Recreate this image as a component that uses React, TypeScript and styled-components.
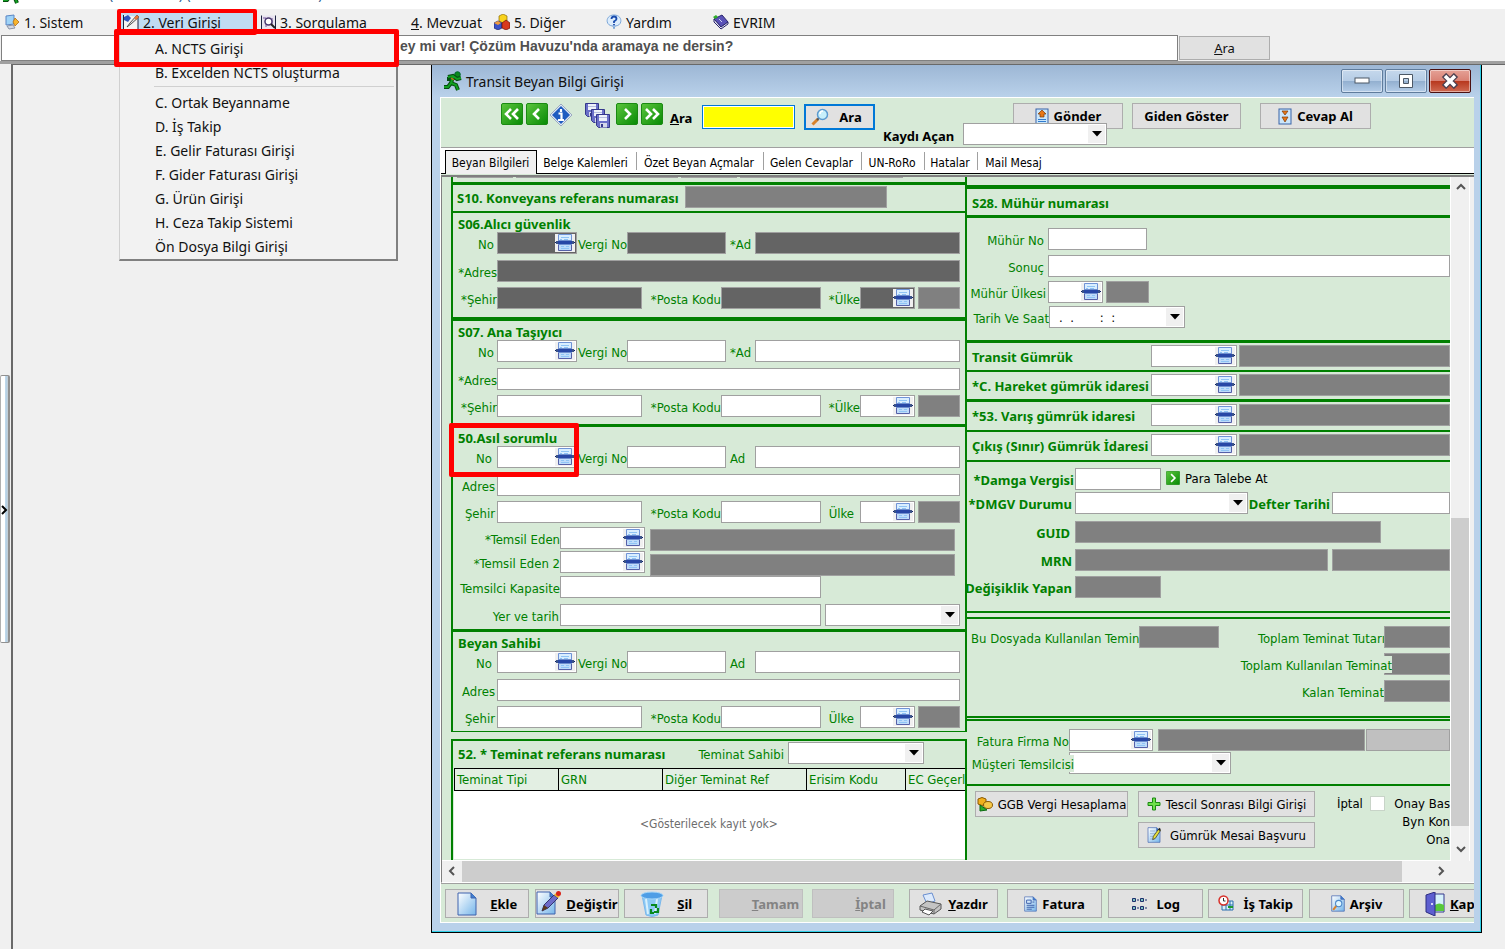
import React from "react";
import styled, { createGlobalStyle, css } from "styled-components";

const ui = '"Noto Sans", "Open Sans", sans-serif';
const form = '"DejaVu Sans Condensed", "DejaVu Sans", sans-serif';
const green = "#008000";
const mint = "#d7ead7";
const dark = "#808080";
const darker = "#646464";
const line = "#a0a0a0";

const Global = createGlobalStyle`
  * { box-sizing: border-box; }
  body { margin: 0; background: #f0f0f0; font-family: ${ui}; font-size: 14px; color: #111; overflow: hidden; }
  button, input, select { font: inherit; color: inherit; margin: 0; border-radius: 0; }
  button { padding: 0; }
  h1, h2, p, ul { margin: 0; padding: 0; font-weight: normal; }
`;

/* ---------- application frame ---------- */
const Page = styled.div`
  display: flex;
  flex-direction: column;
  min-height: 100vh;
  overflow: hidden;
`;
const AppTitle = styled.header`
  display: flex;
  align-items: flex-end;
  gap: 87px;
  height: 9px;
  padding: 0 0 5px 2px;
  background: #fff;
  overflow: hidden;
  color: #2a5a8c;
  line-height: 20px;
  white-space: pre;
`;
const MenuBar = styled.nav`
  position: relative;
  z-index: 5;
  display: flex;
  align-items: center;
  height: 26px;
  padding-left: 4px;
`;
const MenuItem = styled.button<{ $w: number; $active?: boolean }>`
  display: flex;
  align-items: center;
  gap: 4px;
  width: ${(p) => p.$w}px;
  height: 22px;
  border: 0;
  padding: 0 0 0 1px;
  background: ${(p) => (p.$active ? "#c0dcf3" : "transparent")};
  white-space: nowrap;
  text-align: left;
  svg { flex: none; }
`;
const MenuHolder = styled.div`
  position: relative;
  width: 137px;
  margin-right: 4px;
`;
const Dropdown = styled.ul`
  position: absolute;
  top: 23px;
  left: 0;
  width: 279px;
  padding: 3px 2px 0 0;
  background: #f2f2f2;
  border-right: 2px solid #808080;
  border-bottom: 2px solid #808080;
  border-left: 1px solid #d0d0d0;
  list-style: none;
`;
const DropItem = styled.li<{ $rule?: boolean }>`
  height: ${(p) => (p.$rule ? 30 : 24)}px;
  button {
    width: 100%;
    height: 24px;
    border: 0;
    padding: 0 0 0 35px;
    background: none;
    text-align: left;
    line-height: 24px;
  }
  &::after {
    content: "";
    display: ${(p) => (p.$rule ? "block" : "none")};
    margin: 1px 0 0 34px;
    border-top: 1px solid #d0d0d0;
  }
`;
const RedBox = styled.div<{ $x: number; $y: number; $w: number; $h: number; $b?: number }>`
  position: absolute;
  left: ${(p) => p.$x}px;
  top: ${(p) => p.$y}px;
  width: ${(p) => p.$w}px;
  height: ${(p) => p.$h}px;
  border: ${(p) => p.$b || 5}px solid #f00;
  border-radius: 2px;
  pointer-events: none;
  z-index: 6;
`;
const SearchRow = styled.form`
  display: flex;
  align-items: center;
  gap: 1px;
  height: 26px;
  padding-right: 235px;
  padding-left: 1px;
`;
const SearchBox = styled.input`
  flex: 1;
  min-width: 0;
  height: 26px;
  border: 1px solid #808080;
  padding: 0 0 4px 398px;
  background: #fff;
  color: #505050;
  font: bold 14px "Liberation Sans", Arial, sans-serif;
`;
const SearchButton = styled.button`
  width: 91px;
  height: 24px;
  border: 1px solid #adadad;
  background: #e1e1e1;
  font-size: 13px;
`;
const Body = styled.main`
  display: flex;
  align-items: stretch;
  flex: 1;
  border-top: 3px solid #a0a0a0;
`;
const Splitter = styled.div`
  display: flex;
  align-items: flex-start;
  width: 11px;
  padding-top: 311px;
`;
const SplitHandle = styled.button`
  width: 10px;
  height: 268px;
  border: 1px solid #909090;
  border-left-color: #b0b0b0;
  border-radius: 2px;
  background: linear-gradient(90deg, #fff 45%, #a9cbe4 60%, #c8d8e4 80%, #909090 90%);
`;
const Desktop = styled.div`
  flex: 1;
  min-width: 0;
  border-left: 2px solid #696969;
  border-top: 1px solid #696969;
  padding: 0 23px 17px 418px;
`;

/* ---------- child window ---------- */
const Win = styled.section`
  border: 1px solid #000;
  border-top: 0;
  background: #b9d1ea;
  box-shadow: inset -1px -1px 0 #2fd0e8;
  padding: 0 7px 9px 8px;
`;
const WinTitle = styled.header`
  display: flex;
  align-items: center;
  height: 32px;
  margin: 0 -6px 0 -8px;
  padding: 0 9px 0 11px;
  background: linear-gradient(#9db7d5, #b9d1ea);
  h1 { flex: 1; padding-left: 3px; font-size: 14px; }
`;
const WinButton = styled.button<{ $close?: boolean }>`
  display: flex;
  align-items: center;
  justify-content: center;
  width: 42px;
  height: 24px;
  margin-left: 2px;
  border: 1px solid ${(p) => (p.$close ? "#4a1010" : "#5f7c9c")};
  border-radius: 2px;
  background: ${(p) =>
    p.$close
      ? "linear-gradient(#e5a196 0, #d98275 48%, #b8391f 52%, #cf6a52 100%)"
      : "linear-gradient(#c5d8ec 0, #b5cce5 48%, #93b0d0 52%, #b4cde8 100%)"};
  box-shadow: inset 0 0 0 1px rgba(255, 255, 255, 0.45);
`;
const WinBody = styled.div`
  border-left: 1px solid #fff;
  border-top: 1px solid #fff;
  background: ${mint};
  overflow: hidden;
`;
const Toolbar = styled.div`
  position: relative;
  display: flex;
  align-items: flex-start;
  height: 49px;
  padding: 5px 0 0 59px;
  font: bold 13px ${ui};
  color: #000;
`;
const IconButton = styled.button<{ $w: number }>`
  flex: none;
  display: flex;
  justify-content: center;
  width: ${(p) => p.$w}px;
  height: 25px;
  border: 0;
  background: none;
`;
const SearchLabel = styled.label`
  width: 38px;
  padding: 6px 0 0 6px;
`;
const YellowInput = styled.input`
  width: 93px;
  height: 24px;
  margin: 2px 9px 0 0;
  border: 1px solid #0078d7;
  padding: 0 2px;
  background: #ff0;
  box-shadow: inset 0 0 0 1px #fff;
  outline: 0;
`;
const Push = styled.button<{ $w: number; $ml?: number; $h?: number; $focus?: boolean }>`
  flex: none;
  display: flex;
  align-items: center;
  justify-content: center;
  gap: 5px;
  width: ${(p) => p.$w}px;
  height: ${(p) => p.$h || 26}px;
  margin-left: ${(p) => p.$ml || 0}px;
  border: ${(p) => (p.$focus ? "2px solid #0078d7" : "1px solid #adadad")};
  background: #e1e1e1;
  white-space: nowrap;
  color: #000;
  &:disabled { background: #cccccc; border-color: #bfbfbf; color: #838383; }
`;
const FindSlot = styled.div`
  padding-top: 1px;
  button { gap: 10px; padding-right: 6px; }
`;
const SendGroup = styled.div`
  display: flex;
  margin-left: 138px;
`;
const OpenerGroup = styled.div`
  position: absolute;
  left: 442px;
  top: 25px;
  display: flex;
  align-items: center;
  label { width: 80px; padding-top: 4px; }
`;
const TabStrip = styled.div`
  display: flex;
  align-items: flex-end;
  height: 27px;
  padding-left: 4px;
  border-top: 1px solid ${line};
  border-bottom: 1px solid #000;
  background: #fff;
  font: 12px ${form};
  color: #000;
`;
const Tab = styled.button<{ $w: number; $active?: boolean }>`
  flex: none;
  width: ${(p) => p.$w}px;
  height: 18px;
  margin-bottom: 3px;
  padding: 3px 2px 0 0;
  border: 0;
  border-right: 1px solid ${line};
  background: none;
  white-space: nowrap;
  ${(p) =>
    p.$active &&
    css`
      height: 24px;
      margin-bottom: -1px;
      padding: 0 1px 0 0;
      border: 1px solid #000;
      border-bottom: 0;
      background: #f0f0f0;
    `}
  &:last-child { border-right: 0; }
`;
const Pane = styled.div`
  display: grid;
  grid-template-columns: minmax(0, 1fr) 23px;
  grid-template-rows: auto 21px;
  margin-top: 1px;
  border-top: 2px solid ${dark};
  border-left: 1px solid ${dark};
  border-bottom: 1px solid #fff;
  background: #f0f0f0;
`;
const FormArea = styled.div`
  display: flex;
  height: 684px;
  padding-left: 9px;
  border-right: 1px solid #fff;
  border-bottom: 1px solid #fff;
  background: ${mint};
  overflow: hidden;
  font: 13px ${form};
  color: ${green};
`;
const VScroll = styled.div`
  display: flex;
  flex-direction: column;
  width: 19px;
  padding-bottom: 2px;
  border-right: 1px solid #fff;
`;
const HScroll = styled.div`
  display: flex;
`;
const Arrow = styled.button`
  flex: none;
  display: flex;
  align-items: center;
  justify-content: center;
  width: 20px;
  height: 20px;
  border: 0;
  background: none;
`;
const Track = styled.div<{ $grow: number; $thumb?: boolean }>`
  flex: ${(p) => p.$grow} 1 0;
  background: ${(p) => (p.$thumb ? "#cdcdcd" : "#f0f0f0")};
`;

/* ---------- form parts ---------- */
const LeftCol = styled.div`
  flex: none;
  display: flex;
  flex-direction: column;
  width: 516px;
`;
const LeftBox = styled.div<{ $grow?: boolean }>`
  flex: ${(p) => (p.$grow ? 1 : "none")};
  border: 0 solid ${green};
  border-left-width: 2px;
  border-right-width: 2px;
  ${(p) => (p.$grow ? "border-top-width: 2px; margin-top: 7px; overflow: hidden;" : "border-bottom-width: 1px;")}
`;
const RightCol = styled.div`
  flex: 1;
  min-width: 0;
  overflow: hidden;
`;
const Rule = styled.div<{ $h: number }>`
  height: ${(p) => p.$h}px;
  background: ${green};
`;
const Tail = styled.div`
  display: flex;
  gap: 3px;
  height: 5px;
  padding-left: 4px;
  i { height: 1px; background: ${line}; }
`;
const Title = styled.h2`
  height: 19px;
  padding: 2px 0 0 5px;
  font: bold 13px/18px ${ui};
  white-space: nowrap;
`;
const TitleHolder = styled.div`
  position: relative;
`;
const Rows = styled.div<{ $b?: number; $t?: number; $gap?: number }>`
  display: flex;
  flex-direction: column;
  gap: ${(p) => p.$gap ?? 6}px;
  padding: ${(p) => p.$t || 0}px 0 ${(p) => p.$b || 0}px;
`;
const Row = styled.div<{ $t?: number }>`
  display: flex;
  height: 22px;
  margin-top: ${(p) => p.$t || 0}px;
`;
const Label = styled.label<{ $w: number; $left?: boolean; $end?: number; $bold?: boolean }>`
  flex: none;
  display: flex;
  align-items: center;
  justify-content: ${(p) => (p.$left ? "flex-start" : "flex-end")};
  width: ${(p) => p.$w}px;
  padding: 2px ${(p) => (p.$left ? 0 : p.$end ?? 2)}px 0 ${(p) => (p.$left ? p.$end ?? 2 : 0)}px;
  overflow: hidden;
  white-space: nowrap;
  ${(p) => p.$bold && `font: bold 13px ${ui};`}
`;
const OverLabel = styled(Label)<{ $over: number }>`
  position: relative;
  z-index: 1;
  height: 17px;
  margin: 3px ${(p) => -p.$over}px 0 0;
  background: ${mint};
`;
const fieldFace = css<{ $w?: number; $bg?: string }>`
  ${(p) => (p.$w ? `flex: none; width: ${p.$w}px;` : "flex: 1; min-width: 0;")}
  height: 22px;
  border: 1px solid ${line};
  background: ${(p) => p.$bg || "#fff"};
`;
const Input = styled.input<{ $w?: number; $bg?: string }>`
  ${fieldFace}
  padding: 0 4px;
  color: #000;
`;
const FieldShell = styled.div<{ $w?: number; $bg?: string }>`
  ${fieldFace}
  display: flex;
  padding: 1px;
  color: #000;
  input, select {
    flex: 1;
    min-width: 0;
    border: 0;
    padding: 0 8px;
    background: transparent;
    appearance: none;
    white-space: pre;
  }
  > button, > span {
    flex: none;
    display: flex;
    align-items: center;
    justify-content: center;
    width: 20px;
    border: 0;
    background: #f0f0f0;
  }
  > span { width: 17px; pointer-events: none; }
`;
const Space = styled.span<{ $w: number }>`
  flex: none;
  width: ${(p) => p.$w}px;
`;
const Stack = styled.div<{ $gap: number; $t?: number }>`
  display: flex;
  flex-direction: column;
  gap: ${(p) => p.$gap}px;
  padding-top: ${(p) => p.$t || 0}px;
`;
const Pair = styled.div`
  display: flex;
  height: 49px;
  margin-top: -2px;
`;
const Grid = styled.table`
  width: 540px;
  height: 91px;
  margin: 4px 0 0 1px;
  border-collapse: collapse;
  table-layout: fixed;
  background: #fff;
  th {
    height: 22px;
    border: 1px solid #000;
    padding: 0 2px;
    background: #e3efe3;
    text-align: left;
    font-weight: normal;
    white-space: nowrap;
  }
  td { padding: 0 30px 2px 0; text-align: center; color: #6d6d6d; font-size: 12px; }
`;
const Column = styled.th<{ $w?: number }>`
  width: ${(p) => (p.$w ? p.$w + "px" : "auto")};
`;
const ParaLink = styled.button`
  display: flex;
  align-items: center;
  gap: 5px;
  height: 20px;
  border: 0;
  padding: 0;
  margin-left: 5px;
  background: none;
  color: #000;
  white-space: nowrap;
`;
const Actions = styled.div`
  display: grid;
  grid-template-columns: 153px 177px auto minmax(0, 1fr);
  column-gap: 10px;
  row-gap: 5px;
  padding: 5px 0 0 8px;
  color: #000;
  > :nth-child(5) { grid-column: 2; }
`;
const CheckLabel = styled.label`
  display: flex;
  align-items: center;
  gap: 7px;
  padding-left: 12px;
  height: 24px;
  white-space: nowrap;
`;
const Check = styled.input`
  appearance: none;
  width: 15px;
  height: 15px;
  border: 1px solid #c8d4c8;
  background: #fff;
`;
const Notes = styled.div`
  display: flex;
  flex-direction: column;
  align-items: flex-end;
  height: 57px;
  padding-top: 4px;
  line-height: 18px;
  white-space: nowrap;
  grid-row: span 2;
`;
const Footer = styled.footer`
  display: flex;
  height: 40px;
  padding: 5px 0 0 4px;
  border-top: 1px solid ${line};
  border-bottom: 1px solid #fff;
  font: bold 13px ${ui};
  overflow: hidden;
`;

/* ---------- icons ---------- */
const Runner = ({ s = 20 }: { s?: number }) => (
  <svg width={s} height={s} viewBox="0 0 20 20">
    <circle cx="14.5" cy="3.5" r="2.8" fill="#0b8a1c" stroke="#063" />
    <path d="M5 6l5-1 4 3 4-1M10 6l-2 6 5 2 2 5M8 12l-3 4H1M4 8l3 0" fill="none" stroke="#064d10" strokeWidth="4" />
    <path d="M5 6l5-1 4 3 4-1M10 6l-2 6 5 2 2 5M8 12l-3 4H1" fill="none" stroke="#12a022" strokeWidth="2" />
    <path d="M8 7l3 2" stroke="#c66a1a" strokeWidth="1.5" />
  </svg>
);
const Lookup = () => (
  <svg width="20" height="18" viewBox="0 0 20 18">
    <path d="M3.5.5h13v8h-13z" fill="#d9eeff" stroke="#6f93d6" />
    <path d="M3.500 8.500h13v8h-13z" fill="#bfdcfa" stroke="#5560a8" />
    <path d="M6 3.500h8M5 5.500h2m2 0h4M6 12.500h3m2 0h3M6 14.500h8" stroke="#8fc4f5" />
    <path d="M3 6h14v5H3z" fill="#6f8fce" />
    <path d="M1 8.500h18" stroke="#2747a6" strokeWidth="3" />
    <path d="M1 8.500h2m14 0h2" stroke="#3c5488" strokeWidth="3" />
    <path d="M0 8.500h1m18 0h1" stroke="#0c1f66" strokeWidth="1" />
  </svg>
);
const Down = () => (
  <svg width="10" height="6" viewBox="0 0 10 6"><path d="M0 0h10L5 5.500z" fill="#000" /></svg>
);
const Chevron = ({ d }: { d: string }) => (
  <svg width="10" height="10" viewBox="0 0 10 10"><path d={d} fill="none" stroke="#555" strokeWidth="2" /></svg>
);
const GreenNav = ({ d, s = 22 }: { d: string; s?: number }) => (
  <svg width={s} height={s} viewBox="0 0 22 22">
    <defs>
      <linearGradient id="navg" x2="1" y2="1"><stop stopColor="#5cc63d" /><stop offset="1" stopColor="#078a05" /></linearGradient>
    </defs>
    <rect x=".5" y=".5" width="21" height="21" rx="1.500" fill="url(#navg)" stroke="#1a8a12" />
    <path d={d} fill="none" stroke="#fff" strokeWidth="2.600" />
  </svg>
);
const Info = () => (
  <svg width="24" height="24" viewBox="0 0 24 24">
    <path d="M12 1l11 11-11 11L1 12z" fill="#dfe7f2" stroke="#9aa9c0" strokeLinejoin="round" />
    <path d="M12 3l9 9-9 9-9-9z" fill="#1f5cc0" />
    <path d="M12 6v3M9.500 10.500h3V17M9 17h6" stroke="#fff" strokeWidth="2.200" fill="none" />
  </svg>
);
const Disks = () => (
  <svg width="26" height="26" viewBox="0 0 26 26">
    {[0, 6, 11].map((o) => (
      <g key={o} transform={`translate(${o} ${o})`}>
        <path d="M.5.500h13v13h-11l-2-2z" fill="#6a6fc8" stroke="#34388c" />
        <path d="M3 1h8v6H3z" fill="#eef2fa" />
        <path d="M3 3.500h8" stroke="#b8c0e0" />
        <path d="M4 9h7v4.500H4z" fill="#d5d9ea" />
        <path d="M5 10h2v3H5z" fill="#34388c" />
      </g>
    ))}
  </svg>
);
const Magnifier = () => (
  <svg width="18" height="18" viewBox="0 0 18 18">
    <path d="M1.500 16.500L7 11" stroke="#d9822b" strokeWidth="3" />
    <path d="M6 12l2-2" stroke="#555" strokeWidth="2" />
    <circle cx="11.500" cy="6.500" r="5" fill="#c8f0fb" stroke="#5b9bd0" strokeWidth="1.500" />
    <path d="M9 6c0-2 1-3 3-3" stroke="#fff" strokeWidth="1.500" fill="none" />
  </svg>
);
const Transfer = ({ both }: { both?: boolean }) => (
  <svg width="14" height="17" viewBox="0 0 14 17">
    <rect x="1" y="1" width="12" height="15" fill="#cbe6fa" stroke="#3a64a8" />
    {both ? (
      <path d="M4 3h6L7 7zM4 9h6l-3 5z" fill="#e87817" stroke="#7a3a08" strokeWidth=".7" />
    ) : (
      <g>
        <path d="M7 2l4 4H9v3H5V6H3z" fill="#e87817" stroke="#7a3a08" strokeWidth=".7" />
        <path d="M3 11.500h8M3 13.500h8" stroke="#2f7bd0" />
      </g>
    )}
  </svg>
);
const Sheet = ({ kind, w = 16, h = 18 }: { kind: "blank" | "text" | "pencil" | "find" | "edit"; w?: number; h?: number }) => (
  <svg width={w} height={h} viewBox={kind === "pencil" ? "0 0 25 25" : "0 0 20 24"}>
    <defs>
      <linearGradient id="sheetg" x2="1" y2="1"><stop stopColor="#fff" /><stop offset="1" stopColor="#76b6ea" /></linearGradient>
    </defs>
    <path d="M1 1h13l5 5v17H1z" fill="url(#sheetg)" stroke="#3f62ad" />
    <path d="M14 1v5h5" fill="#3f7ed0" stroke="#3f62ad" />
    {kind === "text" && <path d="M4 6h7v5H4zM4 14h12M4 17h12M4 20h8M13 9h3" fill="none" stroke="#3f62ad" strokeWidth="1.500" />}
    {kind === "edit" && <path d="M4 6h8M4 10h8M4 14h5M4 18h8" stroke="#9db7d5" strokeWidth="1.500" />}
    {kind === "edit" && (
      <g>
        <path d="M8 19l1-5L17 3l3 2-8 12z" fill="#e8e03a" stroke="#222" />
        <path d="M16 4l2-3 2 2-1 3z" fill="#222" />
      </g>
    )}
    {kind === "pencil" && (
      <g>
        <path d="M6 20l2-6L18 4l4 3-10 10z" fill="#6c6bc8" stroke="#33336c" />
        <path d="M6 20l2-6 4 3z" fill="#5a3a1c" />
        <path d="M18 4l2-2 4 3-2 2z" fill="#f0b02a" />
        <circle cx="22.500" cy="2.500" r="2.500" fill="#d8241a" />
      </g>
    )}
    {kind === "find" && (
      <g>
        <path d="M3 21l5-6" stroke="#d9822b" strokeWidth="3" />
        <circle cx="11" cy="12" r="4.500" fill="#dff6ff" stroke="#4a86c8" strokeWidth="1.500" />
      </g>
    )}
  </svg>
);
const Bin = () => (
  <svg width="24" height="26" viewBox="0 0 24 26">
    <path d="M2 4h20l-4 20q-6 3-12 0z" fill="#8cc9f5" stroke="#7ab8ec" />
    <path d="M6 8l2 15M17 8l-2 15" stroke="#d7f0fd" strokeWidth="2" />
    <ellipse cx="12" cy="4.500" rx="11" ry="3.500" fill="#4f9ee6" stroke="#a6d6f8" />
    <path d="M11 14h5v3M18 17v4h-4M14 22h-3v-4" fill="none" stroke="#098a1e" strokeWidth="2.200" />
  </svg>
);
const Printer = () => (
  <svg width="24" height="24" viewBox="0 0 24 24">
    <path d="M4 3l9-2 3 8-8 3z" fill="#dceafc" stroke="#6a8fd0" />
    <path d="M1 14l7-5 14 3v5l-7 5-14-4z" fill="#c4c4c4" stroke="#555" />
    <path d="M1 14l14 4 7-6M15 18v4" fill="none" stroke="#666" />
    <path d="M6 17l8 2-4 4-7-3z" fill="#fff" stroke="#555" />
  </svg>
);
const LogIcon = () => (
  <svg width="17" height="14" viewBox="0 0 17 14">
    <path d="M1.500 1.500h3v3h-3zM9.500 1.500h3v3h-3zM1.500 9.500h3v3h-3zM9.500 9.500h3v3h-3z" fill="#7fc4c0" stroke="#1c2f6c" />
    <path d="M6 3h2M14 3h2M6 11h2M14 11h2" stroke="#1c2f6c" />
  </svg>
);
const Clock = () => (
  <svg width="17" height="17" viewBox="0 0 17 17">
    <path d="M4 6h11v9H4zM4 10h11M8 6v9M12 6v9" fill="#d8f0f8" stroke="#2a6fb0" />
    <circle cx="5.500" cy="5.500" r="4.500" fill="#fff" stroke="#d8302a" strokeWidth="1.500" />
    <path d="M5.500 3v3h2" fill="none" stroke="#333" />
    <path d="M10 12h5" stroke="#1e9a2e" strokeWidth="2" />
  </svg>
);
const Door = () => (
  <svg width="20" height="24" viewBox="0 0 20 24">
    <path d="M8 2h11v18H8z" fill="#d6f2fb" stroke="#34388c" />
    <path d="M10 13q4-3 9 0v6h-9z" fill="#57c83a" />
    <path d="M1 3l9-3v24l-9-4z" fill="#5d5fd0" stroke="#2d2f80" />
    <circle cx="7" cy="12" r="1" fill="#fff" />
  </svg>
);
const Coins = () => (
  <svg width="16" height="16" viewBox="0 0 16 16">
    <path d="M1 3q4-3 8 0v5q-4 3-8 0z" fill="#f2b01c" stroke="#8a5a05" />
    <ellipse cx="11" cy="9" rx="4.500" ry="3.500" fill="#f7c948" stroke="#8a5a05" />
    <path d="M3 15V9l7 5z" fill="#2fae2a" stroke="#0b6b10" />
  </svg>
);
const Plus = () => (
  <svg width="14" height="14" viewBox="0 0 14 14">
    <path d="M5.500 1h3v4.500H13v3H8.500V13h-3V8.500H1v-3h4.500z" fill="#6fe04a" stroke="#1c8a14" />
  </svg>
);
const SysIcon = () => (
  <svg width="15" height="16" viewBox="0 0 15 16">
    <path d="M1 2l8-1v9l-8 1z" fill="#9fd3f7" stroke="#5b86c4" />
    <path d="M2 12l6-1 2 3-6 1z" fill="#d3d9e4" stroke="#8a94a8" />
    <path d="M10 4l4 4-4 4-2-4z" fill="#f7b42c" stroke="#a8610a" strokeWidth=".7" />
  </svg>
);
const EntryIcon = () => (
  <svg width="19" height="16" viewBox="-3 0 19 16">
    <path d="M.5 1v14.500H15V3" fill="#f4f4f4" stroke="#1c2340" />
    <path d="M1 3l4-2 3 3-3 4-4-2z" fill="#2f55c0" />
    <path d="M4 13l3-4 7-8 2 2-8 7z" fill="#e0e0e0" stroke="#333" strokeWidth=".8" />
    <path d="M11 4l3-3 2 2-3 3z" fill="#e8783a" />
  </svg>
);
const QueryIcon = () => (
  <svg width="15" height="15" viewBox="0 0 15 15">
    <path d="M.5.500v14h14v-14" fill="#e8e4f0" stroke="#1c2340" />
    <path d="M2 3h3v9M11 3v6" fill="none" stroke="#7a5aa0" />
    <circle cx="7.500" cy="6.500" r="3.500" fill="#fff" stroke="#4a3a70" strokeWidth="1.500" />
    <path d="M10 9l4 4" stroke="#222" strokeWidth="2" />
  </svg>
);
const Cubes = () => (
  <svg width="16" height="16" viewBox="0 0 16 16">
    <path d="M5 2l4-2 4 2v5L9 9 5 7z" fill="#f8d21c" stroke="#8a6a05" strokeWidth=".7" />
    <path d="M0 9l4-2 4 2v5l-4 2-4-2z" fill="#3a52c8" stroke="#1a2060" strokeWidth=".7" />
    <path d="M8 9l4-3 4 3v5l-4 2-4-2z" fill="#d83a1c" stroke="#6a1005" strokeWidth=".7" />
    <path d="M0 9l4-2 3 2-3 2z" fill="#f09a3a" />
  </svg>
);
const Help = () => (
  <svg width="16" height="16" viewBox="0 0 16 16">
    <path d="M8 1c9 0 9 11 1 11l-1 3-1-3C-1 12-1 1 8 1z" fill="#dcecfc" stroke="#7aa6d8" />
    <path d="M5.500 5q0-2.500 2.500-2.500T10.500 5Q10.500 6 8 7.500V9M8 10v1.500" fill="none" stroke="#1a4cae" strokeWidth="1.800" />
  </svg>
);
const Book = () => (
  <svg width="17" height="16" viewBox="0 0 17 16">
    <path d="M2 5l8-4 6 7-7 5z" fill="#5a52b8" stroke="#28246c" />
    <path d="M2 5v3l7 7 7-5V8l-7 5z" fill="#e4e4f2" stroke="#28246c" />
    <path d="M1 3l3-2 2 2-3 2z" fill="#2fae2a" />
    <path d="M7 5l3 3" stroke="#cfd0f2" />
  </svg>
);

/* ---------- composed controls ---------- */
const LookupField = ({ id, w, bg }: { id: string; w?: number; bg?: string }) => (
  <FieldShell $w={w} $bg={bg}>
    <input id={id} />
    <button type="button" aria-label="Listeden seç"><Lookup /></button>
  </FieldShell>
);
const Combo = ({ id, w }: { id: string; w?: number }) => (
  <FieldShell $w={w}>
    <select id={id}><option></option></select>
    <span><Down /></span>
  </FieldShell>
);

type PartyProps = { id: string; star?: boolean; bg?: string };
const PartyRows = ({ id, star, bg }: PartyProps) => {
  const s = star ? "*" : "";
  return (
    <>
      <Row>
        <Label $w={44} $end={star ? 3 : 5} htmlFor={id + "no"}>No</Label>
        <LookupField id={id + "no"} w={80} bg={bg} />
        <Label $w={50} $left $end={1} htmlFor={id + "vergi"}>Vergi No</Label>
        <Input id={id + "vergi"} $w={99} $bg={bg} />
        <Label $w={29} $left $end={4} htmlFor={id + "ad"}>{s}Ad</Label>
        <Input id={id + "ad"} $w={205} $bg={bg} />
      </Row>
      <Row>
        <Label $w={44} $end={star ? 0 : 2} htmlFor={id + "adres"}>{s}Adres</Label>
        <Input id={id + "adres"} $w={463} $bg={bg} />
      </Row>
      <Row $t={-1}>
        <Label $w={44} $end={star ? 0 : 2} htmlFor={id + "sehir"}>{s}Şehir</Label>
        <Input id={id + "sehir"} $w={145} $bg={bg} />
        <Label $w={79} $end={0} htmlFor={id + "posta"}>*Posta Kodu</Label>
        <Input id={id + "posta"} $w={100} $bg={bg} />
        <Label $w={39} $end={star ? 0 : 6} htmlFor={id + "ulke"}>{s}Ülke</Label>
        <LookupField id={id + "ulke"} w={55} bg={bg} />
        <Space $w={3} />
        <Input aria-label="Ülke adı" $w={42} $bg={dark} readOnly />
      </Row>
    </>
  );
};

const OfficeRow = ({ id, text, after }: { id: string; text: string; after: number }) => (
  <Rows $t={2} $b={after}>
    <Row>
      <Label $w={184} $left $end={5} $bold htmlFor={id}>{text}</Label>
      <LookupField id={id} w={86} />
      <Space $w={2} />
      <Input aria-label={text + " adı"} $bg={dark} readOnly />
    </Row>
  </Rows>
);

const dropItems = [
  "A. NCTS Girişi",
  "B. Excelden NCTS oluşturma",
  "C. Ortak Beyanname",
  "D. İş Takip",
  "E. Gelir Faturası Girişi",
  "F. Gider Faturası Girişi",
  "G. Ürün Girişi",
  "H. Ceza Takip Sistemi",
  "Ön Dosya Bilgi Girişi",
];
const tabs: [string, number][] = [
  ["Beyan Bilgileri", 92],
  ["Belge Kalemleri", 100],
  ["Özet Beyan Açmalar", 127],
  ["Gelen Cevaplar", 98],
  ["UN-RoRo", 63],
  ["Hatalar", 53],
  ["Mail Mesaj", 73],
];

export default function App() {
  return (
    <Page>
      <Global />
      <AppTitle><Runner s={20} /><span>{"(                  ) (                                   )"}</span></AppTitle>
      <MenuBar>
        <MenuItem $w={115}><SysIcon />1. Sistem</MenuItem>
        <MenuHolder>
          <MenuItem $w={137} $active><EntryIcon />2. Veri Girişi</MenuItem>
          <Dropdown>
            {dropItems.map((t, i) => (
              <DropItem key={t} $rule={i === 1}><button>{t}</button></DropItem>
            ))}
          </Dropdown>
          <RedBox $x={-2} $y={-2} $w={140} $h={26} $b={4} />
          <RedBox $x={-5} $y={18} $w={285} $h={38} />
        </MenuHolder>
        <MenuItem $w={150}><QueryIcon />3. Sorgulama</MenuItem>
        <MenuItem $w={83}><span><u>4</u>. Mevzuat</span></MenuItem>
        <MenuItem $w={112}><Cubes />5. Diğer</MenuItem>
        <MenuItem $w={106}><Help />Yardım</MenuItem>
        <MenuItem $w={70}><Book />EVRIM</MenuItem>
      </MenuBar>
      <SearchRow>
        <SearchBox aria-label="Çözüm Havuzu" defaultValue="ey mi var! Çözüm Havuzu'nda aramaya ne dersin?" />
        <SearchButton type="button"><u>A</u>ra</SearchButton>
      </SearchRow>
      <Body>
        <Splitter>
          <SplitHandle aria-label="Paneli aç">
            <svg width="8" height="10" viewBox="0 0 8 10"><path d="M1 1l4 4-4 4" fill="none" stroke="#000" strokeWidth="2" /></svg>
          </SplitHandle>
        </Splitter>
        <Desktop>
          <Win>
            <WinTitle>
              <Runner />
              <h1>Transit Beyan Bilgi Girişi</h1>
              <WinButton aria-label="Küçült">
                <svg width="16" height="8"><rect x="1" y="1" width="14" height="5" fill="#fff" stroke="#4c5866" /></svg>
              </WinButton>
              <WinButton aria-label="Büyüt">
                <svg width="16" height="16"><path d="M1.500 1.500h13v13h-13zM5.500 5.500v5h5v-5z" fillRule="evenodd" fill="#fff" stroke="#4c5866" /></svg>
              </WinButton>
              <WinButton $close aria-label="Kapat">
                <svg width="18" height="16" viewBox="0 0 18 16">
                  <path d="M3 2l12 12M15 2L3 14" stroke="#4c4050" strokeWidth="6" />
                  <path d="M4 3l10 10M14 3L4 13" stroke="#fff" strokeWidth="3.500" />
                </svg>
              </WinButton>
            </WinTitle>
            <WinBody>
              <Toolbar>
                <IconButton $w={24} aria-label="İlk"><GreenNav d="M10 6l-5 5 5 5M17 6l-5 5 5 5" /></IconButton>
                <IconButton $w={25} aria-label="Önceki"><GreenNav d="M13 6l-5 5 5 5" /></IconButton>
                <IconButton $w={24} aria-label="Bilgi"><Info /></IconButton>
                <Space $w={12} />
                <IconButton $w={26} aria-label="Kaydet"><Disks /></IconButton>
                <Space $w={3} />
                <IconButton $w={25} aria-label="Sonraki"><GreenNav d="M9 6l5 5-5 5" /></IconButton>
                <IconButton $w={25} aria-label="Son"><GreenNav d="M5 6l5 5-5 5M12 6l5 5-5 5" /></IconButton>
                <SearchLabel htmlFor="ara"><u>A</u>ra</SearchLabel>
                <YellowInput id="ara" />
                <FindSlot><Push $w={71} $focus><Magnifier />Ara</Push></FindSlot>
                <SendGroup>
                  <Push $w={110}><Transfer />Gönder</Push>
                  <Push $w={109} $ml={9}>Giden Göster</Push>
                  <Push $w={111} $ml={19}><Transfer both />Cevap Al</Push>
                </SendGroup>
                <OpenerGroup>
                  <label htmlFor="acan">Kaydı Açan</label>
                  <Combo id="acan" w={144} />
                </OpenerGroup>
              </Toolbar>
              <TabStrip>
                {tabs.map(([t, w], i) => (
                  <Tab key={t} $w={w} $active={i === 0}>{t}</Tab>
                ))}
              </TabStrip>
              <Pane>
                <FormArea>
                  <LeftCol>
                    <LeftBox>
                      <Tail>
                        <i style={{ width: 56 }} />
                        <i style={{ width: 162 }} />
                        <i style={{ width: 56 }} />
                        <i style={{ width: 163 }} />
                      </Tail>
                      <Rule $h={3} />
                      <Rows $t={1} $b={3}>
                        <Row>
                          <Label $w={232} $left $end={4} $bold htmlFor="s10">S10. Konveyans referans numarası</Label>
                          <Input id="s10" $w={202} $bg={dark} readOnly />
                        </Row>
                      </Rows>
                      <Rule $h={2} />
                      <Title>S06.Alıcı güvenlik</Title>
                      <Rows $b={8}><PartyRows id="s06" star bg={darker} /></Rows>
                      <Rule $h={4} />
                      <Title>S07. Ana Taşıyıcı</Title>
                      <Rows $b={7}><PartyRows id="s07" star /></Rows>
                      <Rule $h={3} />
                      <TitleHolder>
                        <RedBox $x={-4} $y={-4} $w={130} $h={54} />
                        <Title>50.Asıl sorumlu</Title>
                      </TitleHolder>
                      <Rows $b={3}>
                        <PartyRows id="s50" />
                        <Stack $gap={0}>
                          <Pair>
                            <Stack $gap={2}>
                              <Row>
                                <Label $w={107} $end={0} htmlFor="te1">*Temsil Eden</Label>
                                <LookupField id="te1" w={85} />
                              </Row>
                              <Row>
                                <Label $w={107} $end={0} htmlFor="te2">*Temsil Eden 2</Label>
                                <LookupField id="te2" w={85} />
                              </Row>
                            </Stack>
                            <Space $w={5} />
                            <Stack $gap={3} $t={2}>
                              <Input aria-label="Temsil eden adı" $w={305} $bg={dark} readOnly />
                              <Input aria-label="Temsil eden 2 adı" $w={305} $bg={dark} readOnly />
                            </Stack>
                          </Pair>
                          <Row>
                            <Label $w={107} $end={0} htmlFor="kap">Temsilci Kapasite</Label>
                            <Input id="kap" $w={261} />
                          </Row>
                        </Stack>
                        <Row>
                          <Label $w={107} $end={1} htmlFor="yer">Yer ve tarih</Label>
                          <Input id="yer" $w={261} />
                          <Space $w={4} />
                          <Combo id="yersec" w={135} />
                        </Row>
                      </Rows>
                      <Rule $h={3} />
                      <Title>Beyan Sahibi</Title>
                      <Rows $b={3}><PartyRows id="bs" /></Rows>
                    </LeftBox>
                    <LeftBox $grow>
                      <Row $t={1}>
                        <Label $w={235} $left $end={5} $bold htmlFor="tsahip">52. * Teminat referans numarası</Label>
                        <Label $w={100} $end={4} htmlFor="tsahip">Teminat Sahibi</Label>
                        <Combo id="tsahip" w={136} />
                      </Row>
                      <Grid>
                        <thead>
                          <tr>
                            <Column $w={104}>Teminat Tipi</Column>
                            <Column $w={104}>GRN</Column>
                            <Column $w={144}>Diğer Teminat Ref</Column>
                            <Column $w={99}>Erisim Kodu</Column>
                            <Column>EC Geçerl</Column>
                          </tr>
                        </thead>
                        <tbody><tr><td colSpan={5}>&lt;Gösterilecek kayıt yok&gt;</td></tr></tbody>
                      </Grid>
                    </LeftBox>
                  </LeftCol>
                  <RightCol>
                    <Rows $t={8} $gap={0}><Rule $h={4} /></Rows>
                    <Rows $t={2} $b={2}>
                      <Row><Label as="h2" $w={300} $left $end={5} $bold>S28. Mühür numarası</Label></Row>
                    </Rows>
                    <Rule $h={3} />
                    <Rows $t={10} $b={12} $gap={4}>
                      <Row>
                        <Label $w={81} $end={4} htmlFor="mno">Mühür No</Label>
                        <Input id="mno" $w={99} />
                      </Row>
                      <Row $t={1}>
                        <Label $w={81} $end={4} htmlFor="sonuc">Sonuç</Label>
                        <Input id="sonuc" />
                      </Row>
                      <Row>
                        <Label $w={81} $end={2} htmlFor="mulke">Mühür Ülkesi</Label>
                        <LookupField id="mulke" w={55} />
                        <Space $w={3} />
                        <Input aria-label="Mühür ülkesi adı" $w={43} $bg={dark} readOnly />
                      </Row>
                      <Row $t={-1}>
                        <Label $w={82} $end={0} htmlFor="tvs">Tarih Ve Saat</Label>
                        <FieldShell $w={136}>
                          <input id="tvs" defaultValue=".  .       :  :" />
                          <span><Down /></span>
                        </FieldShell>
                      </Row>
                    </Rows>
                    <Rule $h={3} />
                    <OfficeRow id="tg" text="Transit Gümrük" after={3} />
                    <Rule $h={2} />
                    <OfficeRow id="hg" text="*C. Hareket gümrük idaresi" after={3} />
                    <Rule $h={3} />
                    <OfficeRow id="vg" text="*53. Varış gümrük idaresi" after={4} />
                    <Rule $h={2} />
                    <OfficeRow id="cg" text="Çıkış (Sınır) Gümrük İdaresi" after={4} />
                    <Rule $h={2} />
                    <Rows $t={6} $b={13} $gap={5}>
                      <Row>
                        <Label $w={108} $bold $end={1} htmlFor="damga">*Damga Vergisi</Label>
                        <Input id="damga" $w={86} />
                        <ParaLink><GreenNav s={14} d="M8 5l6 6-6 6" />Para Talebe At</ParaLink>
                      </Row>
                      <Row $t={-3}>
                        <Label $w={108} $bold $end={3} htmlFor="dmgv">*DMGV Durumu</Label>
                        <Combo id="dmgv" w={173} />
                        <Label $w={84} $bold $end={2} htmlFor="defter">Defter Tarihi</Label>
                        <Input id="defter" />
                      </Row>
                      <Row $t={2}>
                        <Label $w={108} $bold $end={5} htmlFor="guid">GUID</Label>
                        <Input id="guid" $w={306} $bg={dark} readOnly />
                      </Row>
                      <Row $t={1}>
                        <Label $w={108} $bold $end={3} htmlFor="mrn">MRN</Label>
                        <Input id="mrn" $w={253} $bg={dark} readOnly />
                        <Space $w={4} />
                        <Input aria-label="MRN tarihi" $bg={dark} readOnly />
                      </Row>
                      <Row>
                        <Label $w={108} $bold $end={3} htmlFor="dy">Değişiklik Yapan</Label>
                        <Input id="dy" $w={86} $bg={dark} readOnly />
                      </Row>
                    </Rows>
                    <Rule $h={2} />
                    <Rows $t={4}><Rule $h={2} /></Rows>
                    <Rows $t={7} $b={14} $gap={5}>
                      <Row>
                        <Label $w={172} $left $end={4} htmlFor="bdk">Bu Dosyada Kullanılan Teminat</Label>
                        <Input id="bdk" $w={80} $bg={dark} readOnly />
                        <Space $w={37} />
                        <Label $w={128} $left htmlFor="ttt">Toplam Teminat Tutarı</Label>
                        <Input id="ttt" $bg={dark} readOnly />
                      </Row>
                      <Row>
                        <Space $w={270} />
                        <OverLabel $w={155} $end={0} $over={8} htmlFor="tkt">Toplam Kullanılan Teminat</OverLabel>
                        <Input id="tkt" $bg={dark} readOnly />
                      </Row>
                      <Row>
                        <Label $w={417} $end={0} htmlFor="kt">Kalan Teminat</Label>
                        <Input id="kt" $bg={dark} readOnly />
                      </Row>
                    </Rows>
                    <Rule $h={2} />
                    <Rows $t={1}><Rule $h={2} /></Rows>
                    <Rows $t={8} $b={10} $gap={1}>
                      <Row>
                        <Label $w={102} $end={0} htmlFor="ffn">Fatura Firma No</Label>
                        <LookupField id="ffn" w={84} />
                        <Space $w={5} />
                        <Input aria-label="Fatura firma adı" $w={207} $bg={dark} readOnly />
                        <Space $w={1} />
                        <Input aria-label="Fatura firma vergi no" $bg="#c0c0c0" readOnly />
                      </Row>
                      <Row>
                        <OverLabel $w={107} $end={0} $over={5} htmlFor="mt">Müşteri Temsilcisi</OverLabel>
                        <Combo id="mt" w={162} />
                      </Row>
                    </Rows>
                    <Rule $h={2} />
                    <Actions>
                      <Push $w={153}><Coins />GGB Vergi Hesaplama</Push>
                      <Push $w={177}><Plus />Tescil Sonrası Bilgi Girişi</Push>
                      <CheckLabel>İptal<Check type="checkbox" /></CheckLabel>
                      <Notes>
                        <p>Onay Bas</p>
                        <p>Byn Kon</p>
                        <p>Ona</p>
                      </Notes>
                      <Push $w={177}><Sheet kind="edit" w={14} h={16} />&nbsp;Gümrük Mesai Başvuru</Push>
                    </Actions>
                  </RightCol>
                </FormArea>
                <VScroll>
                  <Arrow aria-label="Yukarı"><Chevron d="M1 7l4-4 4 4" /></Arrow>
                  <Track $grow={321} />
                  <Track $grow={308} $thumb />
                  <Track $grow={13} />
                  <Arrow aria-label="Aşağı"><Chevron d="M1 3l4 4 4-4" /></Arrow>
                </VScroll>
                <HScroll>
                  <Arrow aria-label="Sola"><Chevron d="M7 1L3 5l4 4" /></Arrow>
                  <Track $grow={937} $thumb />
                  <Track $grow={29} />
                  <Arrow aria-label="Sağa"><Chevron d="M3 1l4 4-4 4" /></Arrow>
                </HScroll>
              </Pane>
              <Footer>
                <Push $w={84} $h={29}><Sheet kind="blank" w={20} h={24} />&nbsp;<span><u>E</u>kle</span></Push>
                <Push $w={84} $h={29} $ml={6}><Sheet kind="pencil" w={25} h={25} /><span><u>D</u>eğiştir</span></Push>
                <Push $w={84} $h={29} $ml={5}><Bin />&nbsp;<span><u>S</u>il</span></Push>
                <Push $w={84} $h={29} $ml={11} disabled><Space $w={24} /><span><u>T</u>amam</span></Push>
                <Push $w={82} $h={29} $ml={9} disabled><Space $w={30} /><span><u>İ</u>ptal</span></Push>
                <Push $w={89} $h={29} $ml={15}><Printer /><span><u>Y</u>azdır</span></Push>
                <Push $w={95} $h={29} $ml={9}><Sheet kind="text" w={13} h={16} />Fatura</Push>
                <Push $w={95} $h={29} $ml={6}><LogIcon />&nbsp;Log</Push>
                <Push $w={95} $h={29} $ml={5}><Clock />&nbsp;İş Takip</Push>
                <Push $w={95} $h={29} $ml={6}><Sheet kind="find" w={14} h={17} />Arşiv</Push>
                <Push $w={95} $h={29} $ml={5}><Door /><span><u>K</u>apat</span></Push>
              </Footer>
            </WinBody>
          </Win>
        </Desktop>
      </Body>
    </Page>
  );
}
